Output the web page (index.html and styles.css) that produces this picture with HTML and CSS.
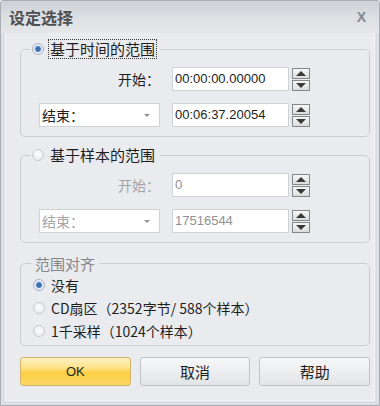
FILE: index.html
```html
<!DOCTYPE html>
<html lang="zh-CN">
<head>
    <meta charset="UTF-8">
    <title>设定选择</title>
    <link rel="stylesheet" href="styles.css">
</head>
<body>
    <div class="dialog">
        <div class="titlebar">
            <span class="title">设定选择</span>
            <span class="close">X</span>
        </div>
        <div class="client">
            <fieldset class="group">
                <legend><span class="radio checked"></span><span class="focus">基于时间的范围</span></legend>
                <div class="row first">
                    <span class="row-label">开始：</span>
                    <div class="field">00:00:00.00000</div>
                    <div class="spin"><span class="up"></span><span class="down"></span></div>
                </div>
                <div class="row">
                    <div class="select">结束：<span class="caret"></span></div>
                    <div class="field">00:06:37.20054</div>
                    <div class="spin"><span class="up"></span><span class="down"></span></div>
                </div>
            </fieldset>

            <fieldset class="group disabled">
                <legend><span class="radio"></span><span class="nofocus">基于样本的范围</span></legend>
                <div class="row first">
                    <span class="row-label">开始：</span>
                    <div class="field">0</div>
                    <div class="spin"><span class="up"></span><span class="down"></span></div>
                </div>
                <div class="row">
                    <div class="select">结束：<span class="caret"></span></div>
                    <div class="field">17516544</div>
                    <div class="spin"><span class="up"></span><span class="down"></span></div>
                </div>
            </fieldset>

            <fieldset class="group align">
                <legend class="plain">范围对齐</legend>
                <div class="option"><span class="radio checked"></span>没有</div>
                <div class="option"><span class="radio"></span>CD扇区（2352字节/ 588个样本）</div>
                <div class="option"><span class="radio"></span>1千采样（1024个样本）</div>
            </fieldset>

            <div class="buttons">
                <button class="btn default">OK</button>
                <button class="btn">取消</button>
                <button class="btn">帮助</button>
            </div>
        </div>
    </div>
</body>
</html>
```

FILE: styles.css
```css
body {
    margin: 0;
    background: #e9ebee;
    font-family: "Noto Sans CJK SC", "Liberation Sans", sans-serif;
    color: #1e1e1e;
}
.dialog {
    width: 380px;
    height: 406px;
    box-sizing: border-box;
    border: 1px solid #a9aeb5;
    border-radius: 3px 3px 0 0;
    background: #dcdfe3;
    display: flex;
    flex-direction: column;
}
.titlebar {
    height: 32px;
    display: flex;
    align-items: center;
    justify-content: space-between;
    padding: 0 13px 0 8px;
    background: linear-gradient(#cdd0d5, #dfe2e5 60%, #e4e6e9);
}
.title {
    font-size: 16px;
    font-weight: bold;
    color: #4d4f53;
}
.close {
    font-family: "Liberation Sans", sans-serif;
    font-size: 14px;
    font-weight: bold;
    color: #84888e;
}
.client {
    flex: 1;
    margin: 0 4px 4px;
    background: #e9ebee;
    border: 1px solid #f4f5f6;
    border-top: none;
    padding-left: 14px;
}
.group {
    margin: 6px 0 0 0;
    width: 350px;
    box-sizing: border-box;
    border: 1px solid #c9cdd2;
    border-radius: 5px;
    padding: 0 0 9px 9px;
}
.group.disabled {
    margin-top: 8px;
    color: #a2a4a8;
}
.group legend {
    display: flex;
    align-items: center;
    height: 20px;
    padding: 0 3px 0 2px;
    font-size: 15px;
}
.group legend.plain {
    padding: 0 4px 0 4px;
    margin-left: 1px;
    color: #85878b;
}
.focus, .nofocus {
    margin-left: 4px;
    padding: 0 1px;
    line-height: 18px;
    border: 1px dotted #333;
}
.nofocus {
    border-color: transparent;
    color: #1e1e1e;
}
.radio {
    display: inline-block;
    width: 12px;
    height: 12px;
    box-sizing: border-box;
    border-radius: 50%;
    border: 1px solid #c6cad0;
    background: radial-gradient(circle at 50% 40%, #fdfdfd, #e3e6ea);
    flex-shrink: 0;
}
.radio.checked {
    border-color: #a7b3c2;
    background: radial-gradient(circle, #2f5e9e 0, #4f82c2 2.5px, #dfe6ef 3.5px, #f4f6f9 6px);
}
.row {
    display: flex;
    align-items: center;
    margin: 12px 0 0 9px;
    height: 24px;
}
.row.first {
    margin-top: 8px;
}
.row-label {
    width: 121px;
    text-align: right;
    font-size: 14px;
}
.select {
    width: 121px;
    height: 24px;
    box-sizing: border-box;
    border: 1px solid #cfd2d6;
    background: #fff;
    font-size: 14px;
    line-height: 22px;
    padding-left: 2px;
    position: relative;
}
.caret {
    position: absolute;
    right: 9px;
    top: 10px;
    border-left: 3px solid transparent;
    border-right: 3px solid transparent;
    border-top: 3px solid #8f9297;
}
.field {
    width: 117px;
    height: 24px;
    box-sizing: border-box;
    margin-left: 12px;
    border: 1px solid #cfd2d6;
    background: #fff;
    font-family: "Liberation Sans", sans-serif;
    font-size: 13px;
    line-height: 22px;
    padding-left: 2px;
    color: #1e1e1e;
}
.disabled .field {
    color: #8f9195;
}
.disabled .select,
.disabled .row-label {
    color: #a2a4a8;
}
.spin {
    display: flex;
    flex-direction: column;
    gap: 1px;
    margin-left: 3px;
}
.spin span {
    width: 18px;
    height: 11px;
    box-sizing: border-box;
    border: 1px solid #84878c;
    background: linear-gradient(#f7f7f7, #dcdcdc);
    display: flex;
    align-items: center;
    justify-content: center;
}
.spin .up::after, .spin .down::after {
    content: "";
    border-left: 5px solid transparent;
    border-right: 5px solid transparent;
}
.spin .up::after {
    border-bottom: 5px solid #3a3a3a;
}
.spin .down::after {
    border-top: 5px solid #3a3a3a;
}
.group.align {
    margin-top: 10px;
    padding-bottom: 3px;
}
.option {
    display: flex;
    align-items: center;
    height: 23px;
    font-size: 14px;
    padding-left: 3px;
}
.option .radio {
    margin-right: 6px;
}
.buttons {
    display: flex;
    gap: 9px;
    width: 350px;
    margin-top: 11px;
}
.btn {
    flex: 1;
    height: 29px;
    border: 1px solid #c0c3c8;
    border-radius: 3px;
    background: linear-gradient(#f6f7f8, #eceef0 50%, #e2e4e7);
    font-family: "Noto Sans CJK SC", sans-serif;
    font-size: 15px;
    color: #1e1e1e;
    padding: 0;
}
.btn.default {
    border-color: #d3b46a;
    background: linear-gradient(#fdf2c4, #fde38a 35%, #fbcf45 55%, #fbd865);
    font-family: "Liberation Sans", sans-serif;
    font-size: 13px;
}
```
